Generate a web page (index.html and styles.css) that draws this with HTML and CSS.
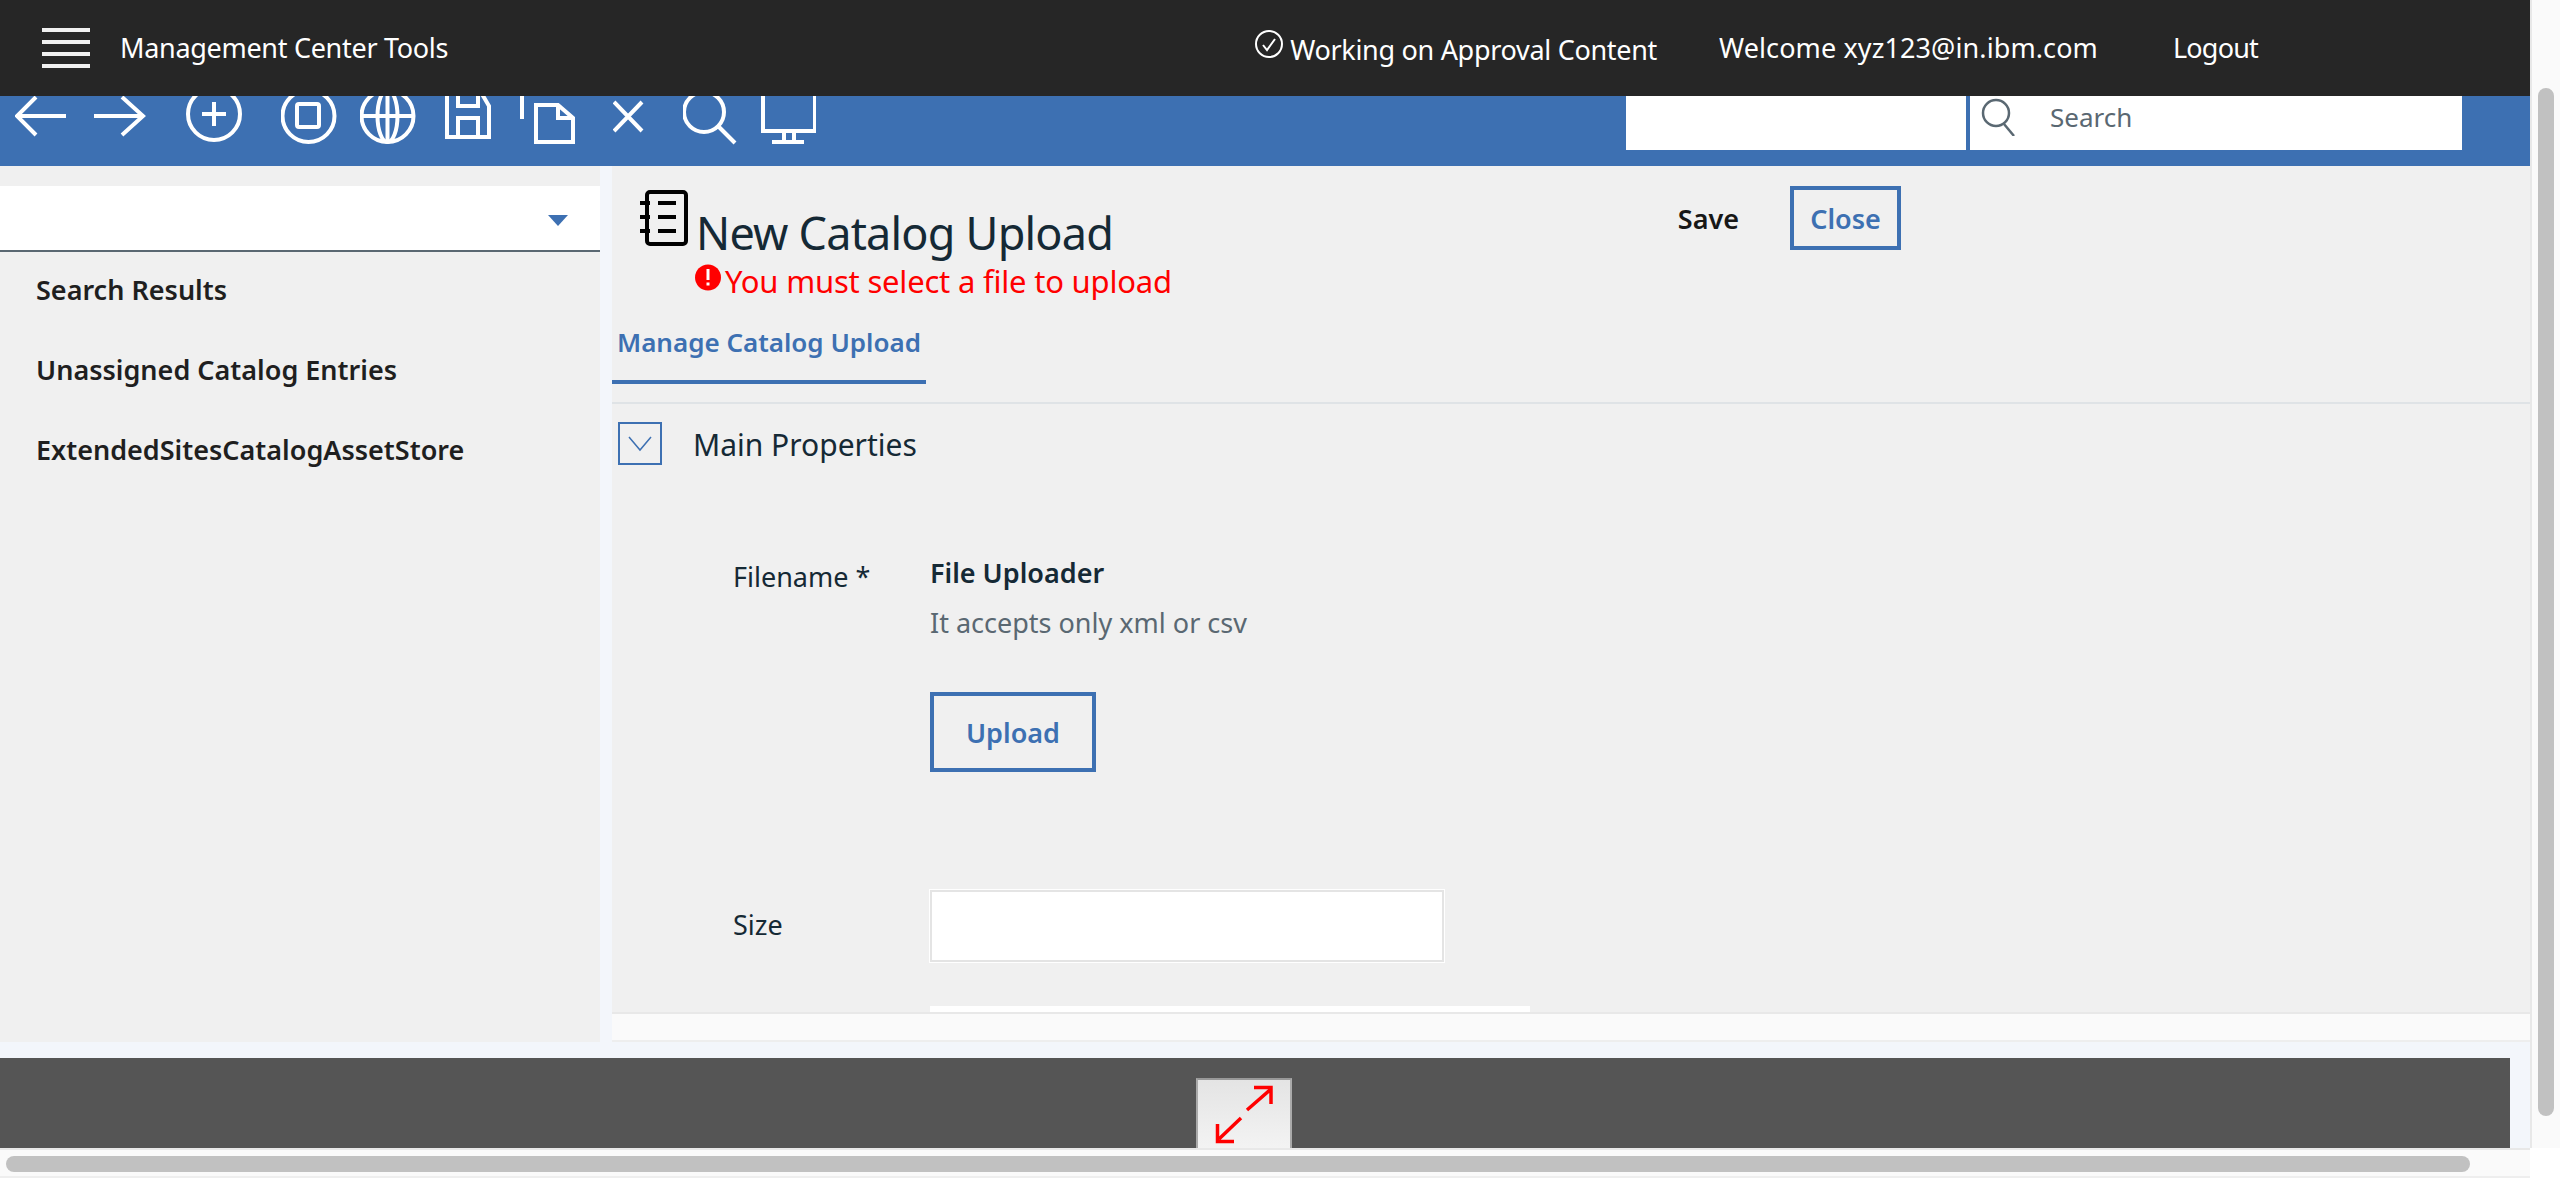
FILE: index.html
```html
<!DOCTYPE html>
<html lang="en">
<head>
    <meta charset="UTF-8">
    <title>Management Center Tools</title>
    <link rel="stylesheet" href="styles.css">
</head>
<body>

<div class="window">
    <div class="app">
        <header class="topbar">
            <div class="hamburger"><span></span><span></span><span></span><span></span></div>
            <span class="app-name">Management Center Tools</span>
            <div class="topbar-right">
                <svg class="status-icon" width="28" height="28" viewBox="0 0 28 28" fill="none" stroke="#fff" stroke-width="2">
                    <circle cx="14" cy="14" r="13"/>
                    <path d="M8 15l4 5 8-11"/>
                </svg>
                <span class="status-text">Working on Approval Content</span>
                <span class="welcome">Welcome xyz123@in.ibm.com</span>
                <span class="logout">Logout</span>
            </div>
        </header>

        <div class="toolbar">
            <div class="tool-icons">
                <svg width="79" height="50" viewBox="0 0 79 50"><path d="M21 1L2 20l19 19M2 20h49"/></svg>
                <svg width="92" height="50" viewBox="0 0 92 50"><path d="M28 1l21 19-21 19M0 20h49"/></svg>
                <svg width="95" height="50" viewBox="0 0 95 50"><circle cx="28" cy="18" r="26"/><path d="M16 18h24M28 6v24"/></svg>
                <svg width="79" height="50" viewBox="0 0 79 50"><circle cx="27.5" cy="20" r="26"/><rect x="16" y="8" width="22" height="23" rx="2"/></svg>
                <svg width="85" height="50" viewBox="0 0 85 50"><circle cx="27.5" cy="20" r="26"/><ellipse cx="27.5" cy="20" rx="10" ry="26"/><path d="M2 20h51M27.5 -6v52"/></svg>
                <svg width="75" height="50" viewBox="0 0 75 50"><path d="M2 -6v47h42V10l-7-12M13 0v10h20V0M13 41V22h20v19"/></svg>
                <svg width="93" height="50" viewBox="0 0 93 50"><path d="M2 0v23M16 9h22l15 13v24H16zM38 9v13h15"/></svg>
                <svg width="70" height="50" viewBox="0 0 70 50"><path d="M1 6l28 29M29 6L1 35"/></svg>
                <svg width="78" height="50" viewBox="0 0 78 50"><circle cx="21" cy="16" r="20"/><path d="M35 30l17 17"/></svg>
                <svg width="55" height="50" viewBox="0 0 55 50"><path d="M2 -6v41h52V-6M23 35v10M33 35v10M11 46h32"/></svg>
            </div>
            <div class="toolbar-box"></div>
            <div class="search-box">
                <svg width="36" height="38" viewBox="0 0 36 38" fill="none" stroke="#5a6872" stroke-width="2.5">
                    <circle cx="15" cy="15" r="13"/>
                    <path d="M23 26l10 12"/>
                </svg>
                <span>Search</span>
            </div>
        </div>

        <div class="workspace">
            <aside class="sidebar">
                <div class="store-select"><i class="caret"></i></div>
                <ul class="tree">
                    <li>Search Results</li>
                    <li>Unassigned Catalog Entries</li>
                    <li>ExtendedSitesCatalogAssetStore</li>
                </ul>
            </aside>

            <section class="detail">
                <div class="detail-scroll">
                    <div class="detail-head">
                        <svg class="title-icon" width="48" height="56" viewBox="0 0 48 56" fill="none" stroke="#000" stroke-width="4">
                            <rect x="7" y="2" width="39" height="52" rx="3"/>
                            <path d="M0 13h10M0 27h10M0 41h10M18 13h18M18 27h18M18 41h18"/>
                        </svg>
                        <div class="title-text">
                            <h1>New Catalog Upload</h1>
                            <div class="error-line">
                                <svg width="26" height="27" viewBox="0 0 26 27">
                                    <circle cx="13" cy="13.5" r="13" fill="#f00"/>
                                    <rect x="11.5" y="5" width="3" height="11" fill="#fff"/>
                                    <rect x="11.5" y="18.5" width="3" height="3" fill="#fff"/>
                                </svg>
                                <span>You must select a file to upload</span>
                            </div>
                        </div>
                        <div class="actions">
                            <span class="save">Save</span>
                            <button class="btn btn-close">Close</button>
                        </div>
                    </div>
                    <div class="tabs">
                        <div class="tab">Manage Catalog Upload</div>
                    </div>
                    <div class="section-head">
                        <span class="chevron-box">
                            <svg width="24" height="16" viewBox="0 0 24 16" fill="none" stroke="#3d70b2" stroke-width="1.5"><path d="M1 1l11 13L23 1"/></svg>
                        </span>
                        <span class="section-title">Main Properties</span>
                    </div>
                    <div class="form-row file-row">
                        <label>Filename *</label>
                        <div class="uploader">
                            <div class="uploader-title">File Uploader</div>
                            <div class="uploader-hint">It accepts only xml or csv</div>
                            <button class="btn btn-upload">Upload</button>
                        </div>
                    </div>
                    <div class="form-row size-row">
                        <label>Size</label>
                        <div class="size-input"></div>
                    </div>
                    <div class="next-field"></div>
                </div>
                <div class="inner-track"></div>
            </section>
        </div>

        <div class="dock">
            <div class="expand-btn">
                <svg width="96" height="68" viewBox="0 0 96 68" fill="none" stroke="#f00" stroke-width="3.5">
                    <path d="M58 7.500h17V24M75 9L51 30M38 61.500H21.500V44M45 38L23 59"/>
                </svg>
            </div>
        </div>
    </div>
    <div class="vscroll"><div class="vthumb"></div></div>
</div>
<div class="hscroll"><div class="hthumb"></div></div>

</body>
</html>
```

FILE: styles.css
```css
* {
    box-sizing: border-box;
}
body {
    margin: 0;
    height: 1178px;
    overflow: hidden;
    background: #fff;
    font-family: "Noto Sans", Arial, sans-serif;
    font-size: 28px;
    color: #152935;
}
.window {
    display: flex;
    height: 1148px;
}
.app {
    width: 2530px;
    background: #f3f6fb;
}

/* top bar */
.topbar {
    display: flex;
    align-items: center;
    height: 96px;
    padding: 0 272px 2px 42px;
    background: #262626;
    color: #fff;
    font-size: 27px;
}
.hamburger {
    display: flex;
    flex-direction: column;
    gap: 8px;
    width: 48px;
    margin: 2px 30px 0 0;
}
.hamburger span {
    height: 4px;
    background: #f0f0f0;
}
.app-name {
    letter-spacing: -0.3px;
}
.topbar-right {
    display: flex;
    align-items: center;
    margin-left: auto;
}
.status-icon {
    margin: -6px 7px 0 0;
}
.status-text {
    margin: 4px 62px 0 0;
    letter-spacing: -0.3px;
}
.welcome {
    margin-right: 75px;
    letter-spacing: 0.1px;
}
.logout {
    letter-spacing: -0.8px;
}

/* toolbar */
.toolbar {
    display: flex;
    align-items: flex-start;
    height: 70px;
    padding: 0 68px 0 15px;
    background: #3d70b2;
}
.tool-icons {
    display: flex;
    margin-right: auto;
}
.tool-icons svg {
    display: block;
    fill: none;
    stroke: #fff;
    stroke-width: 4;
}
.toolbar-box {
    width: 340px;
    height: 54px;
    margin-right: 4px;
    background: #fff;
}
.search-box {
    display: flex;
    align-items: center;
    width: 492px;
    height: 54px;
    padding-left: 11px;
    background: #fff;
    color: #5a6872;
    font-size: 26px;
}
.search-box svg {
    margin-top: -12px;
}
.search-box span {
    margin: -12px 0 0 33px;
}

/* workspace */
.workspace {
    display: flex;
    height: 876px;
}
.sidebar {
    width: 600px;
    margin-right: 12px;
    padding-top: 20px;
    background: #f0f0f0;
}
.store-select {
    display: flex;
    align-items: center;
    justify-content: flex-end;
    height: 66px;
    padding: 0 32px 0 0;
    background: #fff;
    border-bottom: 2px solid #5a6872;
}
.caret {
    width: 0;
    height: 0;
    margin-top: 4px;
    border-left: 10px solid transparent;
    border-right: 10px solid transparent;
    border-top: 11px solid #3d70b2;
}
.tree {
    margin: 0;
    padding: 14px 0 0 36px;
    list-style: none;
    font-size: 27px;
    font-weight: 600;
    color: #1f1f1f;
}
.tree li {
    height: 80px;
    line-height: 48px;
}

/* detail */
.detail {
    width: 1918px;
    background: #f0f0f0;
}
.detail-scroll {
    height: 846px;
    overflow: hidden;
}
.inner-track {
    height: 30px;
    background: #fafafa;
    border-top: 2px solid #e8e8e8;
    border-bottom: 2px solid #eee;
}
.detail-head {
    display: flex;
    align-items: flex-start;
    width: 1289px;
    height: 150px;
    padding: 20px 0 0 28px;
}
.title-icon {
    margin: 4px 10px 0 0;
}
.title-text h1 {
    margin: 24px 0 0 -2px;
    font-size: 45px;
    font-weight: 400;
    line-height: 46px;
    letter-spacing: -0.8px;
}
.error-line {
    display: flex;
    align-items: center;
    margin: 7px 0 0 -3px;
    color: #f00;
    font-size: 31px;
    line-height: 36px;
    letter-spacing: -0.2px;
}
.error-line svg {
    margin: -8px 4px 0 0;
}
.actions {
    display: flex;
    align-items: center;
    margin-left: auto;
}
.save {
    margin-right: 51px;
    font-size: 27px;
    font-weight: 600;
    color: #171717;
}
.btn {
    display: block;
    padding: 0;
    border: 4px solid #3d70b2;
    background: transparent;
    color: #3d70b2;
    font-family: inherit;
    font-size: 27px;
    font-weight: 600;
}
.btn-close {
    width: 111px;
    height: 64px;
}
.tabs {
    height: 88px;
    padding-top: 0;
    border-bottom: 2px solid #dfe3e6;
}
.tab {
    width: 314px;
    height: 68px;
    padding: 6px 0 0 5px;
    border-bottom: 4px solid #3d70b2;
    color: #3d70b2;
    font-size: 26px;
    font-weight: 600;
    line-height: 40px;
    white-space: nowrap;
}
.section-head {
    display: flex;
    align-items: center;
    height: 43px;
    margin: 18px 0 0 6px;
}
.chevron-box {
    display: flex;
    align-items: center;
    justify-content: center;
    width: 44px;
    height: 43px;
    margin-right: 31px;
    border: 2px solid #3d70b2;
}
.section-title {
    margin-top: 2px;
    font-size: 30px;
}

/* form */
.form-row {
    display: flex;
    padding-left: 121px;
}
.form-row label {
    width: 197px;
    font-size: 27px;
    line-height: 36px;
}
.file-row {
    height: 383px;
    padding-top: 90px;
}
.file-row label {
    padding-top: 4px;
}
.uploader-title {
    font-size: 27px;
    font-weight: 600;
    line-height: 36px;
}
.uploader-hint {
    margin-top: 14px;
    color: #5a6872;
    font-size: 27px;
    line-height: 36px;
}
.btn-upload {
    width: 166px;
    height: 80px;
    margin-top: 51px;
}
.size-row {
    height: 72px;
    margin-top: 42px;
    align-items: center;
}
.size-row label {
    margin-top: -2px;
}
.size-input {
    width: 514px;
    height: 72px;
    background: #fff;
    border: 2px solid #e4e4e4;
    outline: 1px solid #fff;
}
.next-field {
    width: 600px;
    height: 40px;
    margin: 44px 0 0 318px;
    background: #fff;
}

/* dock */
.dock {
    width: 2510px;
    height: 90px;
    margin-top: 16px;
    padding: 20px 0 0 1196px;
    background: #555;
}
.expand-btn {
    width: 96px;
    height: 70px;
    border: solid #aaa;
    border-width: 2px 2px 0;
    border-top-color: #999;
    background: linear-gradient(#e4e4e4, #f3f3f3);
}
.expand-btn svg {
    display: block;
    margin: 0 -2px;
}

/* browser scrollbars */
.vscroll {
    width: 30px;
    padding: 88px 0 0 6px;
    background: #fafafa;
    border-left: 2px solid #e8e8e8;
}
.vthumb {
    width: 16px;
    height: 1028px;
    border-radius: 8px;
    background: #c1c1c1;
}
.hscroll {
    width: 2530px;
    height: 30px;
    padding: 6px 0 0 6px;
    background: #fafafa;
    border-top: 2px solid #e8e8e8;
    border-bottom: 2px solid #eee;
}
.hthumb {
    width: 2464px;
    height: 16px;
    border-radius: 8px;
    background: #c1c1c1;
}
```
